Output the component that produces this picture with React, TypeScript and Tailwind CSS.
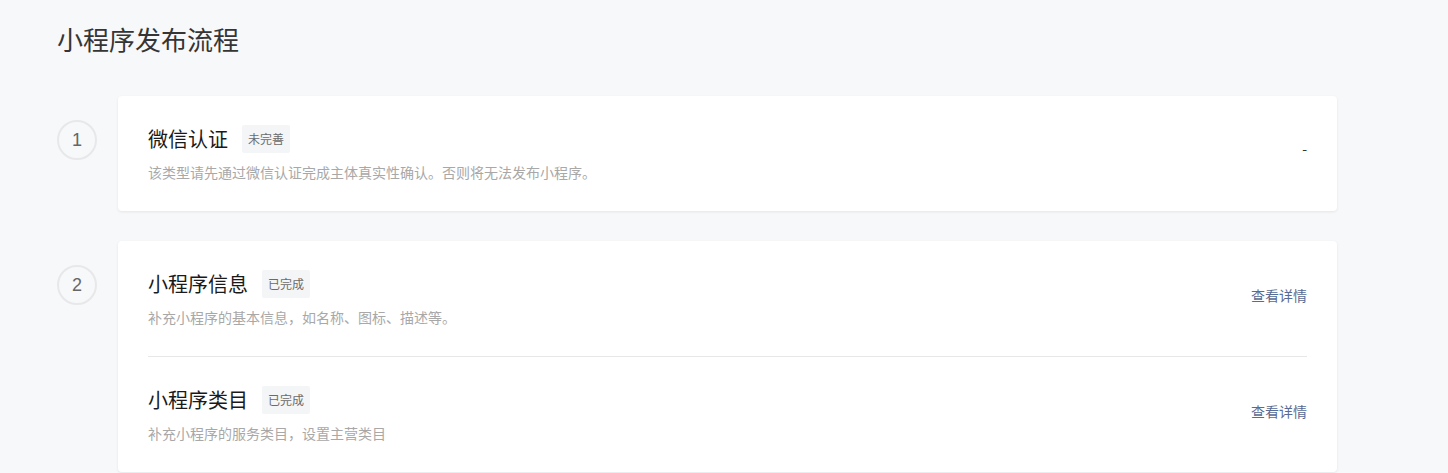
import React from "react";

type Row = { title: string; badge: string; desc: string; action: "dash" | "link" };

const steps: { n: number; rows: Row[] }[] = [
  {
    n: 1,
    rows: [
      {
        title: "微信认证",
        badge: "未完善",
        desc: "该类型请先通过微信认证完成主体真实性确认。否则将无法发布小程序。",
        action: "dash",
      },
    ],
  },
  {
    n: 2,
    rows: [
      { title: "小程序信息", badge: "已完成", desc: "补充小程序的基本信息，如名称、图标、描述等。", action: "link" },
      { title: "小程序类目", badge: "已完成", desc: "补充小程序的服务类目，设置主营类目", action: "link" },
    ],
  },
];

const font = { fontFamily: '"Noto Sans CJK SC", "Noto Sans", sans-serif' };

function StepRow({ row, divider }: { row: Row; divider: boolean }) {
  return (
    <div className={divider ? "border-t border-[#e7e7e7]" : ""}>
      <div className="flex items-center justify-between">
        <div className="pt-[28px] pb-[29px]">
          <div className="flex h-[30px] items-center">
            <span className="text-[20px] leading-[30px] text-[#1a1a1a]">{row.title}</span>
            <span className="ml-[14px] flex h-[28px] items-center rounded-[2px] bg-[#f4f5f7] px-[6px] text-[12px] text-[#6b6b6b]">
              {row.badge}
            </span>
          </div>
          <div className="mt-[8px] text-[14px] leading-[20px] text-[#a8a8a8]">{row.desc}</div>
        </div>
        {row.action === "dash" ? (
          <div className="pb-[14px]">
            <span className="text-[14px] text-[#333]">-</span>
          </div>
        ) : (
          <div className="pb-[10px]">
            <span className="text-[14px] text-[#576b95]">查看详情</span>
          </div>
        )}
      </div>
    </div>
  );
}

export default function App() {
  return (
    <div className="min-h-[473px] w-full bg-[#f7f8fa] pl-[57px] pt-[21px]" style={font}>
      <div className="w-[1280px]">
        <h1 className="text-[26px] leading-[36px] font-normal text-[#353535]">小程序发布流程</h1>
        <div className="mt-[39px] flex flex-col gap-[30px]">
          {steps.map((s) => (
            <div key={s.n} className="flex items-start">
              <div
                className="mt-[24px] flex h-[40px] w-[40px] shrink-0 items-center justify-center rounded-full border-2 border-[#e8e8ea] text-[18px] text-[#666]"
                style={{ fontFamily: '"Liberation Sans", Arial, sans-serif' }}
              >
                {s.n}
              </div>
              <div className="ml-[21px] flex-1 rounded-[4px] bg-white px-[30px] shadow-[0_1px_3px_rgba(0,0,0,0.08)]">
                {s.rows.map((r, i) => (
                  <StepRow key={r.title} row={r} divider={i > 0} />
                ))}
              </div>
            </div>
          ))}
        </div>
      </div>
    </div>
  );
}
